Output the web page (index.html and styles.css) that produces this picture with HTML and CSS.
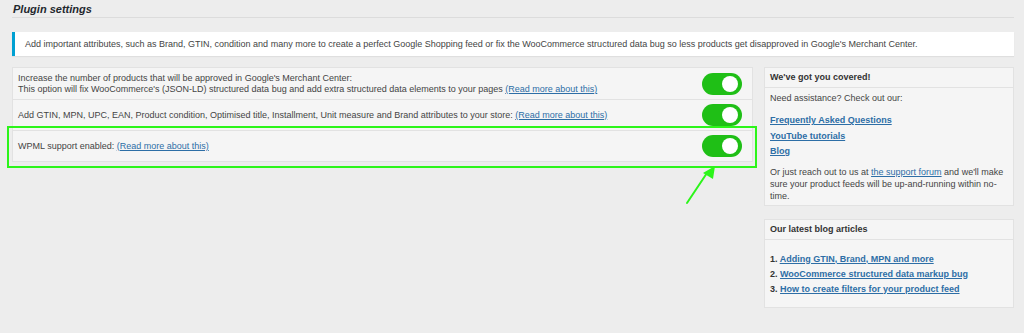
FILE: index.html
```html
<!DOCTYPE html>
<html lang="en">
<head>
    <meta charset="UTF-8">
    <meta name="viewport" content="width=device-width, initial-scale=1.0">
    <title>Plugin settings</title>
    <link rel="stylesheet" href="styles.css">
</head>
<body>
    <div class="wrap">
        <h2 class="page-title">Plugin settings</h2>

        <div class="notice">
            Add important attributes, such as Brand, GTIN, condition and many more to create a perfect Google Shopping feed or fix the WooCommerce structured data bug so less products get disapproved in Google's Merchant Center.
        </div>

        <div class="columns">
            <div class="main">
                <div class="settings">
                    <div class="setting-row">
                        <div class="setting-text">
                            Increase the number of products that will be approved in Google's Merchant Center:<br>
                            This option will fix WooCommerce's (JSON-LD) structured data bug and add extra structured data elements to your pages <a href="#">(Read more about this)</a>
                        </div>
                        <span class="toggle is-on"><span class="knob"></span></span>
                    </div>
                    <div class="setting-row">
                        <div class="setting-text">
                            Add GTIN, MPN, UPC, EAN, Product condition, Optimised title, Installment, Unit measure and Brand attributes to your store: <a href="#">(Read more about this)</a>
                        </div>
                        <span class="toggle is-on"><span class="knob"></span></span>
                    </div>
                    <div class="setting-row highlighted">
                        <div class="setting-text">
                            WPML support enabled: <a href="#">(Read more about this)</a>
                        </div>
                        <span class="toggle is-on"><span class="knob"></span></span>
                    </div>
                </div>

                <!-- annotation arrow pointing at the WPML toggle -->
                <svg class="arrow" width="40" height="44" viewBox="0 0 40 44">
                    <line x1="3" y1="40" x2="23" y2="10" stroke="#2cf51a" stroke-width="2" stroke-linecap="round"/>
                    <polygon points="31,3 29,16 19,10" fill="#2cf51a"/>
                </svg>
            </div>

            <aside class="sidebar">
                <div class="box">
                    <div class="box-title">We've got you covered!</div>
                    <div class="box-body">
                        <p>Need assistance? Check out our:</p>
                        <ul class="help-links">
                            <li><a href="#">Frequently Asked Questions</a></li>
                            <li><a href="#">YouTube tutorials</a></li>
                            <li><a href="#">Blog</a></li>
                        </ul>
                        <p>Or just reach out to us at <a href="#" class="forum-link">the support forum</a> and we'll make sure your product feeds will be up-and-running within no-time.</p>
                    </div>
                </div>

                <div class="box">
                    <div class="box-title">Our latest blog articles</div>
                    <div class="box-body">
                        <ol class="articles">
                            <li><a href="#">Adding GTIN, Brand, MPN and more</a></li>
                            <li><a href="#">WooCommerce structured data markup bug</a></li>
                            <li><a href="#">How to create filters for your product feed</a></li>
                        </ol>
                    </div>
                </div>
            </aside>
        </div>
    </div>
</body>
</html>
```

FILE: styles.css
```css
* {
    margin: 0;
    padding: 0;
    box-sizing: border-box;
}

body {
    font-family: "Liberation Sans", Arial, sans-serif;
    font-size: 9px;
    line-height: 11px;
    color: #444;
    background: #ededed;
}

a {
    color: #2d6ea6;
    text-decoration: underline;
}

.wrap {
    padding: 3px 10px 0 12px;
}

.page-title {
    font-size: 11px;
    font-style: italic;
    font-weight: bold;
    color: #23282d;
    line-height: 13px;
    padding-left: 1px;
    padding-bottom: 1px;
    border-bottom: 1px solid #dcdcdc;
}

.notice {
    margin-top: 14px;
    background: #fff;
    border-left: 3px solid #00a0d2;
    padding: 7px 10px 6px;
    line-height: 11px;
    box-shadow: 0 1px 1px rgba(0, 0, 0, 0.06);
}

.columns {
    display: flex;
    gap: 11px;
    margin-top: 11px;
    align-items: flex-start;
}

.main {
    position: relative;
    width: 741px;
    flex-shrink: 0;
}

.settings {
    background: #f5f5f5;
    border: 1px solid #e2e2e2;
    border-bottom: none;
}

.setting-row {
    display: flex;
    align-items: center;
    justify-content: space-between;
    padding: 4px 10px 4px 5px;
    border-bottom: 1px solid #e2e2e2;
    min-height: 31px;
}

.setting-row:first-child {
    padding-top: 5px;
}

.highlighted {
    position: relative;
}

.highlighted::after {
    content: "";
    position: absolute;
    top: -5px;
    left: -6px;
    right: -5px;
    bottom: -7px;
    border: 2px solid #2cf51a;
}

.toggle {
    position: relative;
    width: 40px;
    height: 22px;
    border-radius: 11px;
    background: #1fbf16;
    flex-shrink: 0;
}

.toggle .knob {
    position: absolute;
    top: 3px;
    right: 4px;
    width: 16px;
    height: 16px;
    border-radius: 50%;
    background: #fff;
}

.arrow {
    position: absolute;
    left: 672px;
    top: 96px;
}

.sidebar {
    width: 250px;
    display: flex;
    flex-direction: column;
    gap: 13px;
}

.box {
    background: #f5f5f5;
    border: 1px solid #e2e2e2;
}

.box-title {
    font-weight: bold;
    color: #333;
    padding: 4px 5px;
    border-bottom: 1px solid #e2e2e2;
}

.box-body {
    padding: 4px 4px 3px 5px;
}

.box-body p {
    line-height: 12px;
}

.help-links {
    list-style: none;
    margin: 9px 0 6px;
}

.help-links li {
    line-height: 15.5px;
}

.help-links a {
    font-weight: bold;
}

.articles {
    list-style: none;
    counter-reset: item;
    margin-top: 8px;
    margin-bottom: 7px;
    font-weight: bold;
}

.articles li {
    counter-increment: item;
    line-height: 15px;
}

.articles li::before {
    content: counter(item) ". ";
    color: #333;
}
```
